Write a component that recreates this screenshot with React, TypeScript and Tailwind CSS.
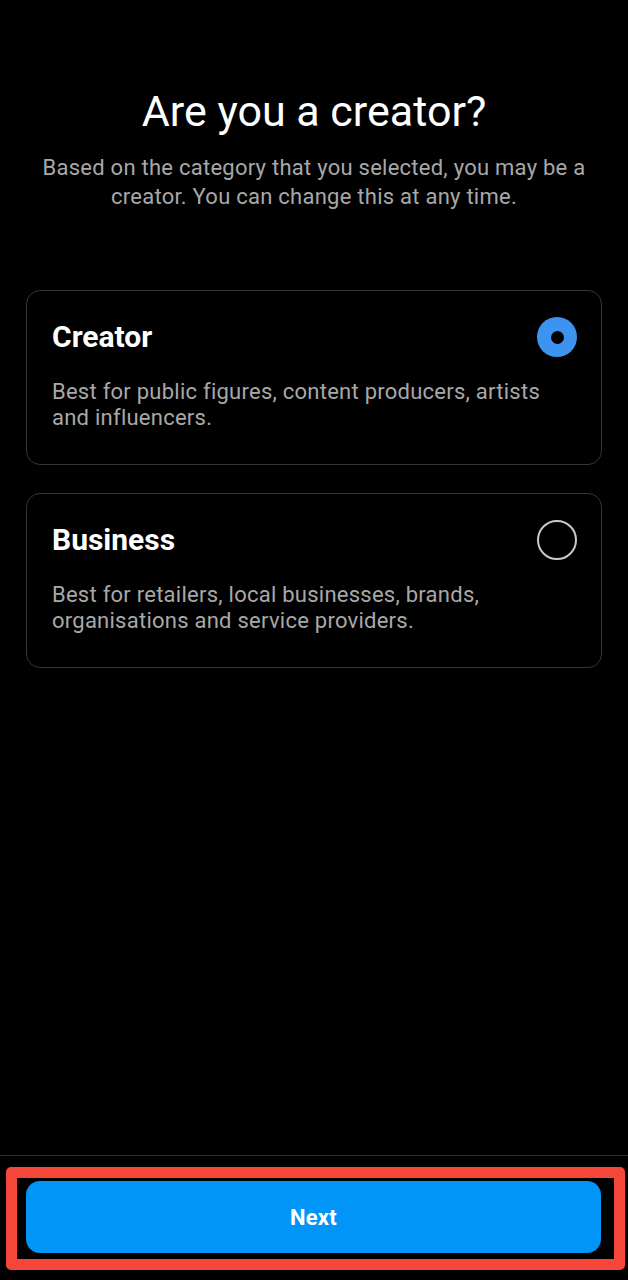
const font = { fontFamily: "Roboto, 'Liberation Sans', sans-serif" };

interface OptionCardProps {
  title: string;
  description: string;
  selected?: boolean;
}

function Radio({ selected }: { selected?: boolean }) {
  if (selected) {
    return (
      <div className="flex h-10 w-10 shrink-0 items-center justify-center rounded-full bg-[#3d94f0]">
        <div className="h-[13px] w-[13px] rounded-full bg-black" />
      </div>
    );
  }
  return <div className="h-10 w-10 shrink-0 rounded-full border-[2.5px] border-[#c9c9c9]" />;
}

function OptionCard({ title, description, selected }: OptionCardProps) {
  return (
    <div className="mx-[26px] h-[175px] rounded-[14px] border border-[#363636] pl-[25px] pr-[24px] pt-[26px]">
      <div className="flex items-center justify-between">
        <h2 className="text-[30px] leading-[36px] font-bold text-white">{title}</h2>
        <Radio selected={selected} />
      </div>
      <p className="mt-[22px] max-w-[505px] text-[22px] leading-[26px] tracking-[0.25px] text-[#a8a8a8]">
        {description}
      </p>
    </div>
  );
}

export default function App() {
  return (
    <div className="flex min-h-[1280px] flex-col bg-black" style={font}>
      <main className="flex-1">
        <h1 className="pt-[87px] text-center text-[43px] leading-[48px] font-normal text-white">
          Are you a creator?
        </h1>
        <p className="mt-[18px] px-[24px] text-center text-[22px] leading-[29px] tracking-[0.25px] text-[#a8a8a8]">
          Based on the category that you selected, you may be a creator. You can change this at any
          time.
        </p>

        <div className="mt-[79px] flex flex-col gap-[28px]">
          <OptionCard
            title="Creator"
            description="Best for public figures, content producers, artists and influencers."
            selected
          />
          <OptionCard
            title="Business"
            description="Best for retailers, local businesses, brands, organisations and service providers."
          />
        </div>
      </main>

      <footer className="border-t border-[#2e2e2e] pt-[11px] pb-[10px]">
        <div className="ml-[6px] h-[103px] w-[619px] rounded-[5px] border-[11px] border-[#f4473a] pl-[9px] pt-[3px]">
          <button className="flex h-[72px] w-[575px] items-center justify-center rounded-[14px] bg-[#0095f6] text-[22px] font-bold tracking-[0.25px] text-white">
            Next
          </button>
        </div>
      </footer>
    </div>
  );
}
